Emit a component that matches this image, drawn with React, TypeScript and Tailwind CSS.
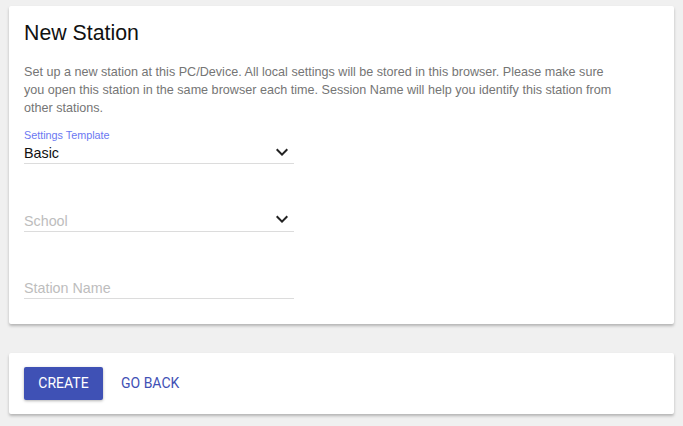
import React from 'react';

const Chevron = ({ className }: { className: string }) => (
  <svg width="24" height="24" viewBox="0 0 24 24" className={className}>
    <path d="M7.41 8.59 12 13.17l4.59-4.58L18 10l-6 6-6-6 1.41-1.41z" fill="currentColor" />
  </svg>
);

export default function App() {
  return (
    <div className="min-h-screen bg-[#f0f0f0] px-[9px] pt-[6px] pb-3 font-[Liberation_Sans]">
      <div className="bg-white h-[318px] px-[15px] pt-[15px] shadow-[0_2px_3px_rgba(0,0,0,0.25)] rounded-[2px]">
        <h1 className="text-[21.3px] leading-[25px] text-[#111]">New Station</h1>
        <p className="mt-[17px] w-[595px] text-[12.6px] leading-[18px] text-[#757575]">
          Set up a new station at this PC/Device. All local settings will be stored in this browser. Please make sure you open this station in the same browser each time. Session Name will help you identify this station from other stations.
        </p>

        <div className="mt-[12px] w-[270px]">
          <div className="text-[10.8px] leading-[12px] text-[#6b78f2]">Settings Template</div>
          <div className="relative h-[23px] pt-[2px] border-b border-[#dcdcdc]">
            <span className="block text-[14.3px] leading-[20px] text-[#111]">Basic</span>
            <Chevron className="absolute right-0 top-[-1px] text-[#222]" />
          </div>
        </div>

        <div className="mt-[34px] w-[270px]">
          <div className="relative h-[34px] border-b border-[#dcdcdc] flex items-end">
            <span className="text-[14.3px] leading-[20px] text-[#bdbdbd]">School</span>
            <Chevron className="absolute right-0 bottom-0 text-[#222]" />
          </div>
        </div>

        <div className="mt-[33px] w-[270px]">
          <div className="h-[34px] border-b border-[#dcdcdc] flex items-end">
            <span className="text-[14.3px] leading-[20px] text-[#bdbdbd]">Station Name</span>
          </div>
        </div>
      </div>

      <div className="mt-[29px] bg-white h-[61px] px-[15px] flex items-center gap-[18px] shadow-[0_2px_3px_rgba(0,0,0,0.25)] rounded-[2px]">
        <button className="h-[33px] w-[79px] bg-[#3f51b5] text-white text-[14px] rounded-[2px] shadow-[0_1px_3px_rgba(0,0,0,0.3)] font-[Roboto]">
          CREATE
        </button>
        <button className="text-[#3f51b5] text-[14px] font-[Roboto]">GO BACK</button>
      </div>
    </div>
  );
}
